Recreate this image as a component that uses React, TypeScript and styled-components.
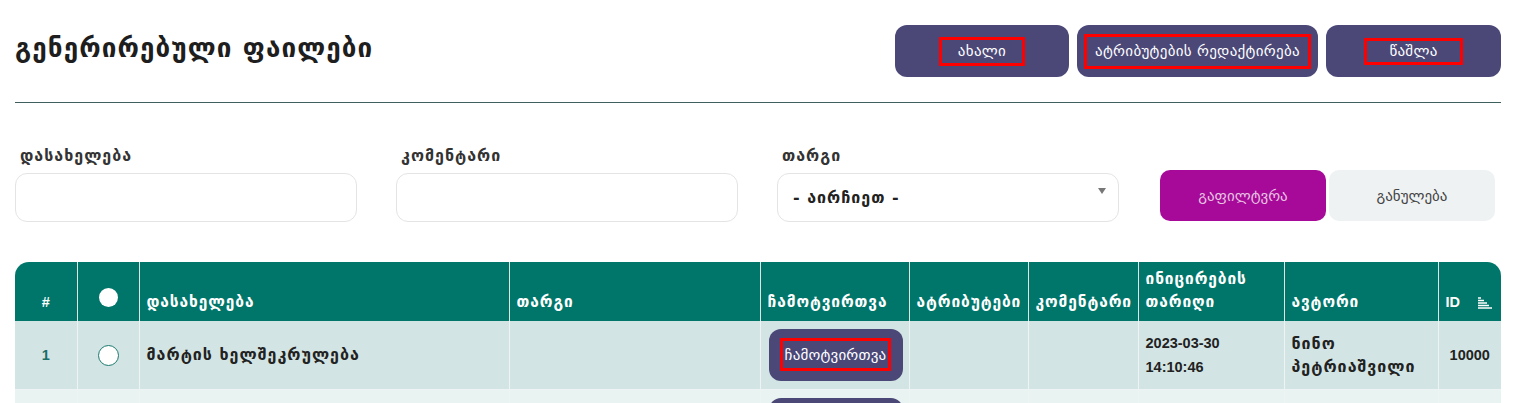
import React from 'react';
import styled, { createGlobalStyle } from 'styled-components';

const GlobalStyle = createGlobalStyle`
  html, body {
    margin: 0;
    padding: 0;
    background: #fff;
  }
  body {
    font-family: "Liberation Sans", "DejaVu Sans", sans-serif;
    color: #222;
  }
`;

const ScPage = styled.div`
  width: 1519px;
  padding: 0 18px 0 15px;
  box-sizing: border-box;
`;

const ScHeader = styled.div`
  display: flex;
  align-items: center;
  justify-content: space-between;
  height: 52px;
  padding: 25px 0 25px;
  border-bottom: 1px solid #3f5f5c;
`;

const ScTitle = styled.h1`
  margin: 0 0 6px;
  font-family: "DejaVu Sans", sans-serif;
  font-size: 26px;
  letter-spacing: 1.1px;
  font-weight: bold;
  color: #1e1e1e;
`;

const ScActions = styled.div`
  display: flex;
  gap: 8px;
`;

const ScActionButton = styled.button<{ $w: number }>`
  display: flex;
  align-items: center;
  justify-content: center;
  width: ${(p) => p.$w}px;
  height: 52px;
  border: none;
  border-radius: 12px;
  background: #4b4878;
  color: #fff;
  font-family: "DejaVu Sans", sans-serif;
  font-size: 15px;
  letter-spacing: 0.3px;
  padding: 0;
`;

const ScMark = styled.span<{ $px: number; $h: number }>`
  display: inline-flex;
  align-items: center;
  justify-content: center;
  box-sizing: border-box;
  height: ${(p) => p.$h}px;
  padding: 0 ${(p) => p.$px}px;
  border: 3px solid #f00;
`;

const ScFilters = styled.div`
  display: flex;
  align-items: flex-end;
  margin-top: 43px;
`;

const ScField = styled.div`
  display: flex;
  flex-direction: column;
  width: 342px;
  margin-right: 39px;
`;

const ScLabel = styled.label`
  padding-left: 5px;
  margin-bottom: 8px;
  font-family: "DejaVu Sans", sans-serif;
  font-size: 16px;
  letter-spacing: 1px;
  font-weight: bold;
  color: #333;
  line-height: 19px;
`;

const ScInput = styled.div`
  position: relative;
  display: flex;
  align-items: center;
  height: 49px;
  box-sizing: border-box;
  border: 1px solid #e4e4e4;
  border-radius: 12px;
  background: #fff;
  padding-left: 15px;
  font-family: "DejaVu Sans", sans-serif;
  font-size: 16px;
  letter-spacing: 1px;
  font-weight: bold;
  color: #222;
`;

const ScCaret = styled.span`
  position: absolute;
  right: 12px;
  top: 14px;
  width: 0;
  height: 0;
  border-left: 4px solid transparent;
  border-right: 4px solid transparent;
  border-top: 6px solid #777;
`;

const ScFilterButtons = styled.div`
  display: flex;
  gap: 3px;
  margin: 0 0 1px 2px;
`;

const ScFilterButton = styled.button<{ $primary?: boolean }>`
  width: 166px;
  height: 51px;
  border: none;
  border-radius: 10px;
  background: ${(p) => (p.$primary ? '#a70a98' : '#eef2f3')};
  color: ${(p) => (p.$primary ? '#e6c3e2' : '#444')};
  font-family: "DejaVu Sans", sans-serif;
  font-size: 15px;
`;

const ScTableWrap = styled.div`
  margin-top: 40px;
  border-radius: 14px 14px 0 0;
  overflow: hidden;
`;

const ScTable = styled.table`
  width: 1486px;
  border-collapse: collapse;
  table-layout: fixed;
`;

const ScTh = styled.th<{ $center?: boolean }>`
  height: 59px;
  box-sizing: border-box;
  background: #00766a;
  color: #fff;
  font-family: "DejaVu Sans", sans-serif;
  font-size: 15.5px;
  letter-spacing: 0.9px;
  font-weight: bold;
  text-align: ${(p) => (p.$center ? 'center' : 'left')};
  vertical-align: bottom;
  padding: ${(p) => (p.$center ? '0 0 7px 0' : '0 3px 7px 7px')};
  line-height: 23px;
  border-right: 1px solid #dde6e4;
  white-space: nowrap;
  &:last-child {
    border-right: none;
  }
`;

const ScRow = styled.tr<{ $alt?: boolean }>`
  background: ${(p) => (p.$alt ? '#e9f3f1' : '#d2e5e4')};
`;

const ScTd = styled.td<{ $center?: boolean; $teal?: boolean }>`
  height: 68px;
  box-sizing: border-box;
  padding: ${(p) => (p.$center ? '0' : '0 4px 0 7px')};
  border-right: 1px solid #eef4f3;
  border-bottom: 1px solid #eef4f3;
  font-family: "DejaVu Sans", sans-serif;
  font-size: 16px;
  letter-spacing: 1px;
  font-weight: bold;
  line-height: 23px;
  color: ${(p) => (p.$teal ? '#1c6e66' : '#222')};
  text-align: ${(p) => (p.$center ? 'center' : 'left')};
  vertical-align: middle;
  &:last-child {
    border-right: none;
  }
`;

const ScTdCut = styled(ScTd)`
  height: 14px;
  vertical-align: top;
  padding-top: 8px;
  border-bottom: none;
`;

const ScNum = styled.span`
  font-family: "Liberation Sans", sans-serif;
  font-size: 14.5px;
  letter-spacing: 0;
`;

const ScRadio = styled.span<{ $filled?: boolean }>`
  display: inline-block;
  box-sizing: border-box;
  width: ${(p) => (p.$filled ? 19 : 21)}px;
  height: ${(p) => (p.$filled ? 19 : 21)}px;
  border-radius: 50%;
  background: #fff;
  border: ${(p) => (p.$filled ? 'none' : '1.5px solid #1c7a70')};
  vertical-align: middle;
`;

const ScHeadRadio = styled.div`
  display: flex;
  justify-content: center;
  margin-bottom: 7px;
`;

const ScDownload = styled.button`
  display: flex;
  align-items: center;
  justify-content: center;
  width: 134px;
  height: 52px;
  margin-left: 1px;
  border: none;
  border-radius: 12px;
  background: #4b4878;
  color: #fff;
  font-family: "DejaVu Sans", sans-serif;
  font-size: 15px;
  letter-spacing: 0.2px;
  padding: 0;
`;

const ScDownloadCut = styled.div`
  width: 134px;
  height: 20px;
  margin-left: 1px;
  border-radius: 12px 12px 0 0;
  background: #4b4878;
`;

const ScIdHead = styled.div`
  display: flex;
  align-items: center;
  justify-content: space-between;
  padding: 0 9px 0 7px;
`;

function SortIcon(): JSX.Element {
  return (
    <svg width="14" height="12" viewBox="0 0 14 12">
      <g stroke="#fff" strokeWidth="1.4">
        <line x1="0" y1="1" x2="3" y2="1" />
        <line x1="0" y1="3.5" x2="6" y2="3.5" />
        <line x1="0" y1="6" x2="9" y2="6" />
        <line x1="0" y1="8.5" x2="11" y2="8.5" />
        <line x1="0" y1="11" x2="14" y2="11" />
      </g>
    </svg>
  );
}

const widths = [62, 62, 370, 251, 149, 119, 110, 146, 154, 63];

export default function App(): JSX.Element {
  return (
    <>
      <GlobalStyle />
      <ScPage>
        <ScHeader>
          <ScTitle>გენერირებული ფაილები</ScTitle>
          <ScActions>
            <ScActionButton $w={174}>
              <ScMark $px={16} $h={29}>ახალი</ScMark>
            </ScActionButton>
            <ScActionButton $w={241}>
              <ScMark $px={8} $h={35}>ატრიბუტების რედაქტირება</ScMark>
            </ScActionButton>
            <ScActionButton $w={175}>
              <ScMark $px={22} $h={27}>წაშლა</ScMark>
            </ScActionButton>
          </ScActions>
        </ScHeader>

        <ScFilters>
          <ScField>
            <ScLabel>დასახელება</ScLabel>
            <ScInput />
          </ScField>
          <ScField>
            <ScLabel>კომენტარი</ScLabel>
            <ScInput />
          </ScField>
          <ScField>
            <ScLabel>თარგი</ScLabel>
            <ScInput>
              - აირჩიეთ -
              <ScCaret />
            </ScInput>
          </ScField>
          <ScFilterButtons>
            <ScFilterButton $primary>გაფილტვრა</ScFilterButton>
            <ScFilterButton>განულება</ScFilterButton>
          </ScFilterButtons>
        </ScFilters>

        <ScTableWrap>
          <ScTable>
            <colgroup>
              {widths.map((w, i) => (
                <col key={i} style={{ width: w }} />
              ))}
            </colgroup>
            <thead>
              <tr>
                <ScTh $center><ScNum>#</ScNum></ScTh>
                <ScTh $center>
                  <ScHeadRadio>
                    <ScRadio $filled />
                  </ScHeadRadio>
                </ScTh>
                <ScTh>დასახელება</ScTh>
                <ScTh>თარგი</ScTh>
                <ScTh>ჩამოტვირთვა</ScTh>
                <ScTh>ატრიბუტები</ScTh>
                <ScTh>კომენტარი</ScTh>
                <ScTh>ინიცირების<br />თარიღი</ScTh>
                <ScTh>ავტორი</ScTh>
                <ScTh $center>
                  <ScIdHead>
                    <ScNum>ID</ScNum>
                    <SortIcon />
                  </ScIdHead>
                </ScTh>
              </tr>
            </thead>
            <tbody>
              <ScRow>
                <ScTd $center $teal><ScNum>1</ScNum></ScTd>
                <ScTd $center><ScRadio /></ScTd>
                <ScTd>მარტის ხელშეკრულება</ScTd>
                <ScTd />
                <ScTd>
                  <ScDownload>
                    <ScMark $px={2} $h={33}>ჩამოტვირთვა</ScMark>
                  </ScDownload>
                </ScTd>
                <ScTd />
                <ScTd />
                <ScTd><ScNum>2023-03-30<br />14:10:46</ScNum></ScTd>
                <ScTd>ნინო<br />პეტრიაშვილი</ScTd>
                <ScTd $center><ScNum>10000</ScNum></ScTd>
              </ScRow>
              <ScRow $alt>
                <ScTdCut />
                <ScTdCut />
                <ScTdCut />
                <ScTdCut />
                <ScTdCut>
                  <ScDownloadCut />
                </ScTdCut>
                <ScTdCut />
                <ScTdCut />
                <ScTdCut />
                <ScTdCut />
                <ScTdCut />
              </ScRow>
            </tbody>
          </ScTable>
        </ScTableWrap>
      </ScPage>
    </>
  );
}
